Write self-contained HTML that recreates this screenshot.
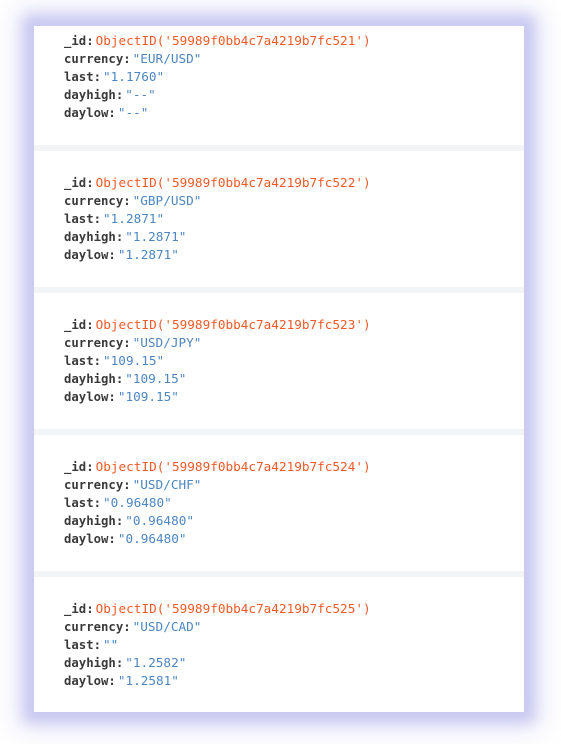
<!DOCTYPE html>
<html><head><style>
body{margin:0;width:561px;height:744px;background:#fff;position:relative;overflow:hidden}
.panel{position:absolute;left:34px;top:26px;width:490px;height:686px;background:#f3f4f6;box-shadow:0 0 12px 10px #c9c9f2,0 0 26px 16px rgba(200,200,240,.55)}
.card{position:absolute;left:0;width:490px;background:#fff}
.l{position:absolute;left:64px;line-height:18px;white-space:nowrap}
.k{font-family:"DejaVu Sans Mono","Liberation Mono",monospace;font-weight:bold;color:#3a3a3a;font-size:12.3px;margin-right:2px}
.v{font-family:"DejaVu Sans Mono","Liberation Mono",monospace;color:#4e86c0;font-size:12.7px}
.o{font-family:"DejaVu Sans Mono","Liberation Mono",monospace;color:#f05a28;font-size:12.7px}
</style></head><body>
<div class="panel">
<div class="card" style="top:0;height:119px"></div>
<div class="card" style="top:125px;height:136px"></div>
<div class="card" style="top:267px;height:136px"></div>
<div class="card" style="top:409px;height:136px"></div>
<div class="card" style="top:551px;height:135px"></div>
</div>
<div class="l" style="top:32px"><span class="k">_id:</span><span class="o">ObjectID('59989f0bb4c7a4219b7fc521')</span></div>
<div class="l" style="top:50px"><span class="k">currency:</span><span class="v">"EUR/USD"</span></div>
<div class="l" style="top:68px"><span class="k">last:</span><span class="v">"1.1760"</span></div>
<div class="l" style="top:86px"><span class="k">dayhigh:</span><span class="v">"--"</span></div>
<div class="l" style="top:104px"><span class="k">daylow:</span><span class="v">"--"</span></div>

<div class="l" style="top:174px"><span class="k">_id:</span><span class="o">ObjectID('59989f0bb4c7a4219b7fc522')</span></div>
<div class="l" style="top:192px"><span class="k">currency:</span><span class="v">"GBP/USD"</span></div>
<div class="l" style="top:210px"><span class="k">last:</span><span class="v">"1.2871"</span></div>
<div class="l" style="top:228px"><span class="k">dayhigh:</span><span class="v">"1.2871"</span></div>
<div class="l" style="top:246px"><span class="k">daylow:</span><span class="v">"1.2871"</span></div>

<div class="l" style="top:316px"><span class="k">_id:</span><span class="o">ObjectID('59989f0bb4c7a4219b7fc523')</span></div>
<div class="l" style="top:334px"><span class="k">currency:</span><span class="v">"USD/JPY"</span></div>
<div class="l" style="top:352px"><span class="k">last:</span><span class="v">"109.15"</span></div>
<div class="l" style="top:370px"><span class="k">dayhigh:</span><span class="v">"109.15"</span></div>
<div class="l" style="top:388px"><span class="k">daylow:</span><span class="v">"109.15"</span></div>

<div class="l" style="top:458px"><span class="k">_id:</span><span class="o">ObjectID('59989f0bb4c7a4219b7fc524')</span></div>
<div class="l" style="top:476px"><span class="k">currency:</span><span class="v">"USD/CHF"</span></div>
<div class="l" style="top:494px"><span class="k">last:</span><span class="v">"0.96480"</span></div>
<div class="l" style="top:512px"><span class="k">dayhigh:</span><span class="v">"0.96480"</span></div>
<div class="l" style="top:530px"><span class="k">daylow:</span><span class="v">"0.96480"</span></div>

<div class="l" style="top:600px"><span class="k">_id:</span><span class="o">ObjectID('59989f0bb4c7a4219b7fc525')</span></div>
<div class="l" style="top:618px"><span class="k">currency:</span><span class="v">"USD/CAD"</span></div>
<div class="l" style="top:636px"><span class="k">last:</span><span class="v">""</span></div>
<div class="l" style="top:654px"><span class="k">dayhigh:</span><span class="v">"1.2582"</span></div>
<div class="l" style="top:672px"><span class="k">daylow:</span><span class="v">"1.2581"</span></div>
</body></html>
